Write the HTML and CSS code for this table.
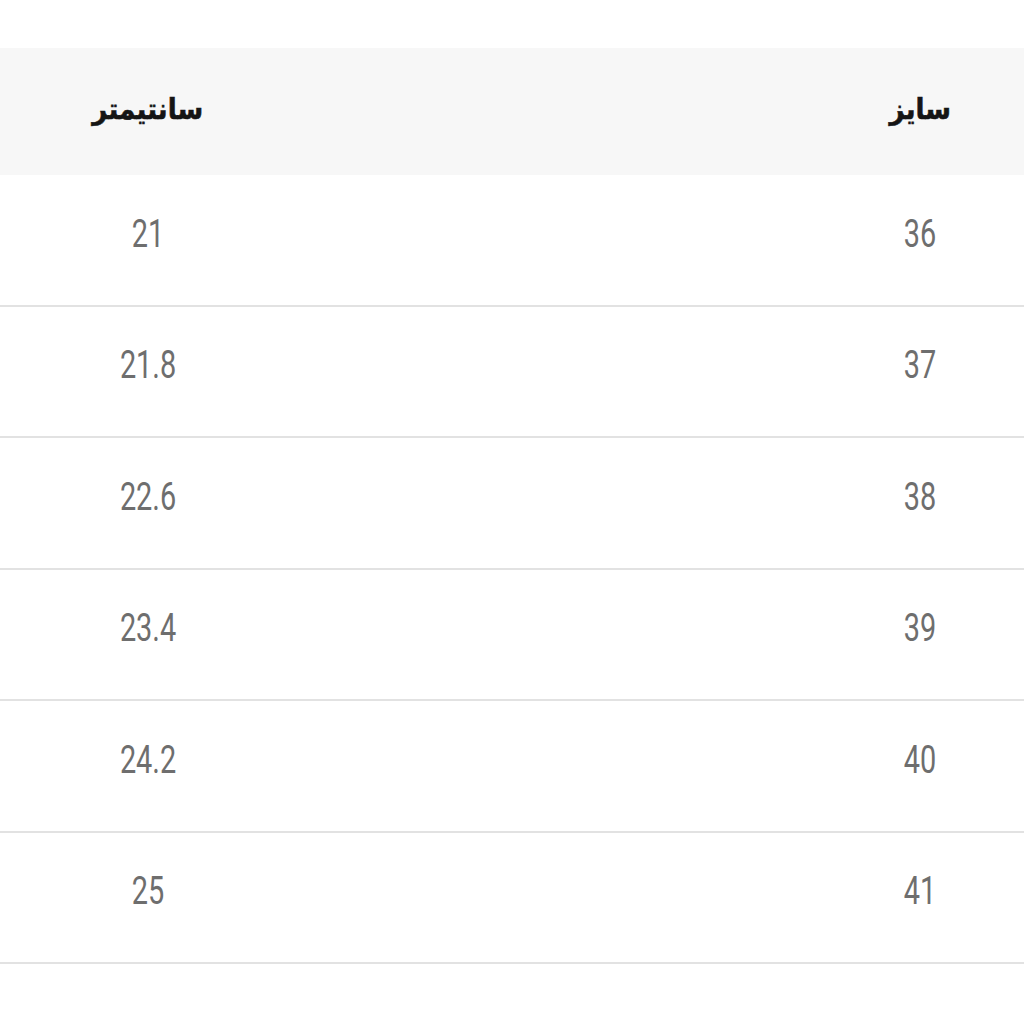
FILE: index.html
```html
<!DOCTYPE html>
<html lang="fa" dir="rtl">
<head>
<meta charset="utf-8">
<link rel="stylesheet" href="styles.css">
</head>
<body>
<div class="table">
  <div class="row head">
    <div class="cell size"><span class="h">سایز</span></div>
    <div class="cell gap"></div>
    <div class="cell cm"><span class="h">سانتیمتر</span></div>
  </div>
  <div class="row"><div class="cell size"><span class="n">36</span></div><div class="cell gap"></div><div class="cell cm"><span class="n">21</span></div></div>
  <div class="row"><div class="cell size"><span class="n">37</span></div><div class="cell gap"></div><div class="cell cm"><span class="n">21.8</span></div></div>
  <div class="row"><div class="cell size"><span class="n">38</span></div><div class="cell gap"></div><div class="cell cm"><span class="n">22.6</span></div></div>
  <div class="row"><div class="cell size"><span class="n">39</span></div><div class="cell gap"></div><div class="cell cm"><span class="n">23.4</span></div></div>
  <div class="row"><div class="cell size"><span class="n">40</span></div><div class="cell gap"></div><div class="cell cm"><span class="n">24.2</span></div></div>
  <div class="row"><div class="cell size"><span class="n">41</span></div><div class="cell gap"></div><div class="cell cm"><span class="n">25</span></div></div>
</div>
</body>
</html>
```
FILE: styles.css
```css
html, body {
  margin: 0;
  padding: 0;
  background: #ffffff;
}
.table {
  margin-top: 48px;
  width: 1024px;
}
.row {
  display: grid;
  grid-template-columns: 208px 1fr 296px;
  height: 129.5px;
  border-bottom: 2px solid #e2e2e2;
  box-sizing: content-box;
}
.row.head {
  height: 127px;
  background: #f7f7f7;
  border-bottom: none;
}
.cell {
  display: flex;
  align-items: center;
  justify-content: center;
  padding-bottom: 12px;
  box-sizing: border-box;
}
.head .cell {
  padding-bottom: 6px;
}
.h {
  display: inline-block;
  font-family: "DejaVu Sans", sans-serif;
  font-weight: bold;
  font-size: 29px;
  color: #151515;
  transform: scaleX(0.9);
  -webkit-text-stroke: 0.6px #151515;
}
.n {
  display: inline-block;
  font-family: "Roboto", "Liberation Sans", sans-serif;
  font-size: 39px;
  color: #6e6e6e;
  transform: scaleX(0.74);
  direction: ltr;
}
```
